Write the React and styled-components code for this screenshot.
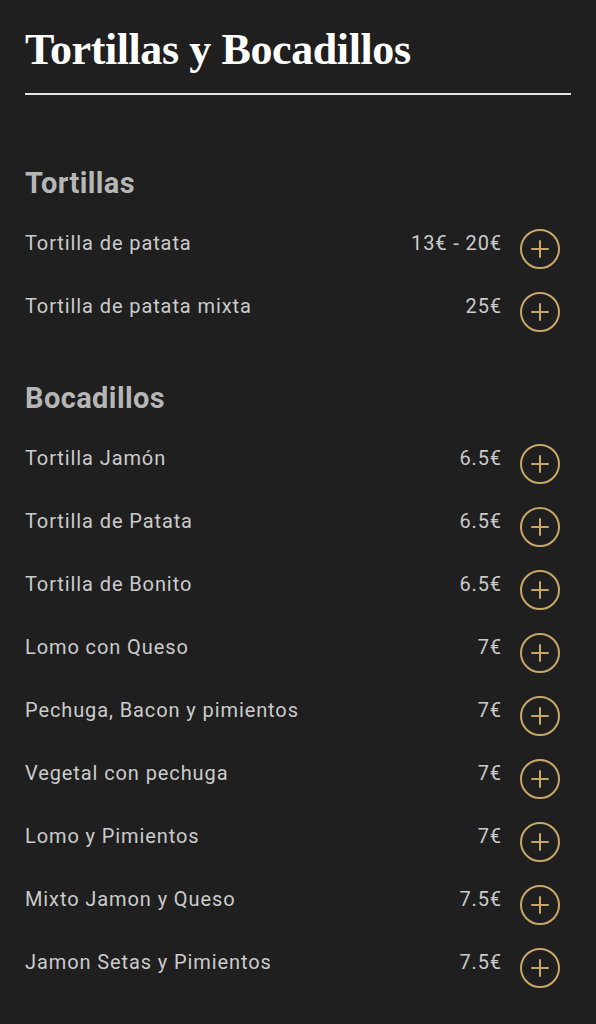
import React from 'react';
import styled, { createGlobalStyle } from 'styled-components';

const GlobalStyle = createGlobalStyle`
  html, body {
    margin: 0;
    padding: 0;
    background: #1f1f1f;
  }
  body {
    font-family: Roboto, "Liberation Sans", sans-serif;
  }
`;

const sections = [
  {
    title: 'Tortillas',
    items: [
      { name: 'Tortilla de patata', price: '13€ - 20€' },
      { name: 'Tortilla de patata mixta', price: '25€' },
    ],
  },
  {
    title: 'Bocadillos',
    items: [
      { name: 'Tortilla Jamón', price: '6.5€' },
      { name: 'Tortilla de Patata', price: '6.5€' },
      { name: 'Tortilla de Bonito', price: '6.5€' },
      { name: 'Lomo con Queso', price: '7€' },
      { name: 'Pechuga, Bacon y pimientos', price: '7€' },
      { name: 'Vegetal con pechuga', price: '7€' },
      { name: 'Lomo y Pimientos', price: '7€' },
      { name: 'Mixto Jamon y Queso', price: '7.5€' },
      { name: 'Jamon Setas y Pimientos', price: '7.5€' },
    ],
  },
];

const PlusIcon = () => (
  <svg width="40" height="40" viewBox="0 0 40 40" fill="none">
    <circle cx="20" cy="20" r="19" stroke="#c8a767" strokeWidth="2" />
    <path d="M20 12v16M12 20h16" stroke="#c8a767" strokeWidth="2" strokeLinecap="round" />
  </svg>
);

const App = () => (
  <>
    <GlobalStyle />
    <Page>
      <Title>Tortillas y Bocadillos</Title>
      {sections.map((section) => (
        <Section key={section.title}>
          <SectionTitle>{section.title}</SectionTitle>
          {section.items.map((item) => (
            <Row key={item.name}>
              <Name>{item.name}</Name>
              <Price>{item.price}</Price>
              <AddButton type="button" aria-label={`Añadir ${item.name}`}>
                <PlusIcon />
              </AddButton>
            </Row>
          ))}
        </Section>
      ))}
    </Page>
  </>
);

const Page = styled.main`
  padding: 0 25px 24px;
  min-height: 1024px;
  box-sizing: border-box;
`;

const Title = styled.h1`
  margin: 0;
  padding: 26px 0 19px;
  font-family: "Liberation Serif", "DejaVu Serif", serif;
  font-weight: 700;
  font-size: 44px;
  line-height: 48px;
  letter-spacing: -0.4px;
  color: #ffffff;
  border-bottom: 2px solid #e4e4e4;
`;

const Section = styled.section`
  margin-top: 71px;
  & + & {
    margin-top: 38px;
  }
`;

const SectionTitle = styled.h2`
  margin: 0 0 17px;
  font-size: 29px;
  line-height: 34px;
  font-weight: 700;
  letter-spacing: 0.4px;
  color: #b6b6b6;
`;

const Row = styled.div`
  display: flex;
  align-items: center;
  height: 63px;
  padding-right: 11px;
`;

const Name = styled.span`
  flex: 1;
  font-size: 20px;
  line-height: 24px;
  letter-spacing: 0.9px;
  color: #cbcbcb;
  margin-bottom: 12px;
`;

const Price = styled.span`
  font-size: 20px;
  line-height: 24px;
  letter-spacing: 0.9px;
  color: #cbcbcb;
  margin-bottom: 12px;
`;

const AddButton = styled.button`
  display: flex;
  width: 40px;
  height: 40px;
  margin-left: 18px;
  padding: 0;
  border: none;
  background: transparent;
  cursor: pointer;
`;

export default App;
